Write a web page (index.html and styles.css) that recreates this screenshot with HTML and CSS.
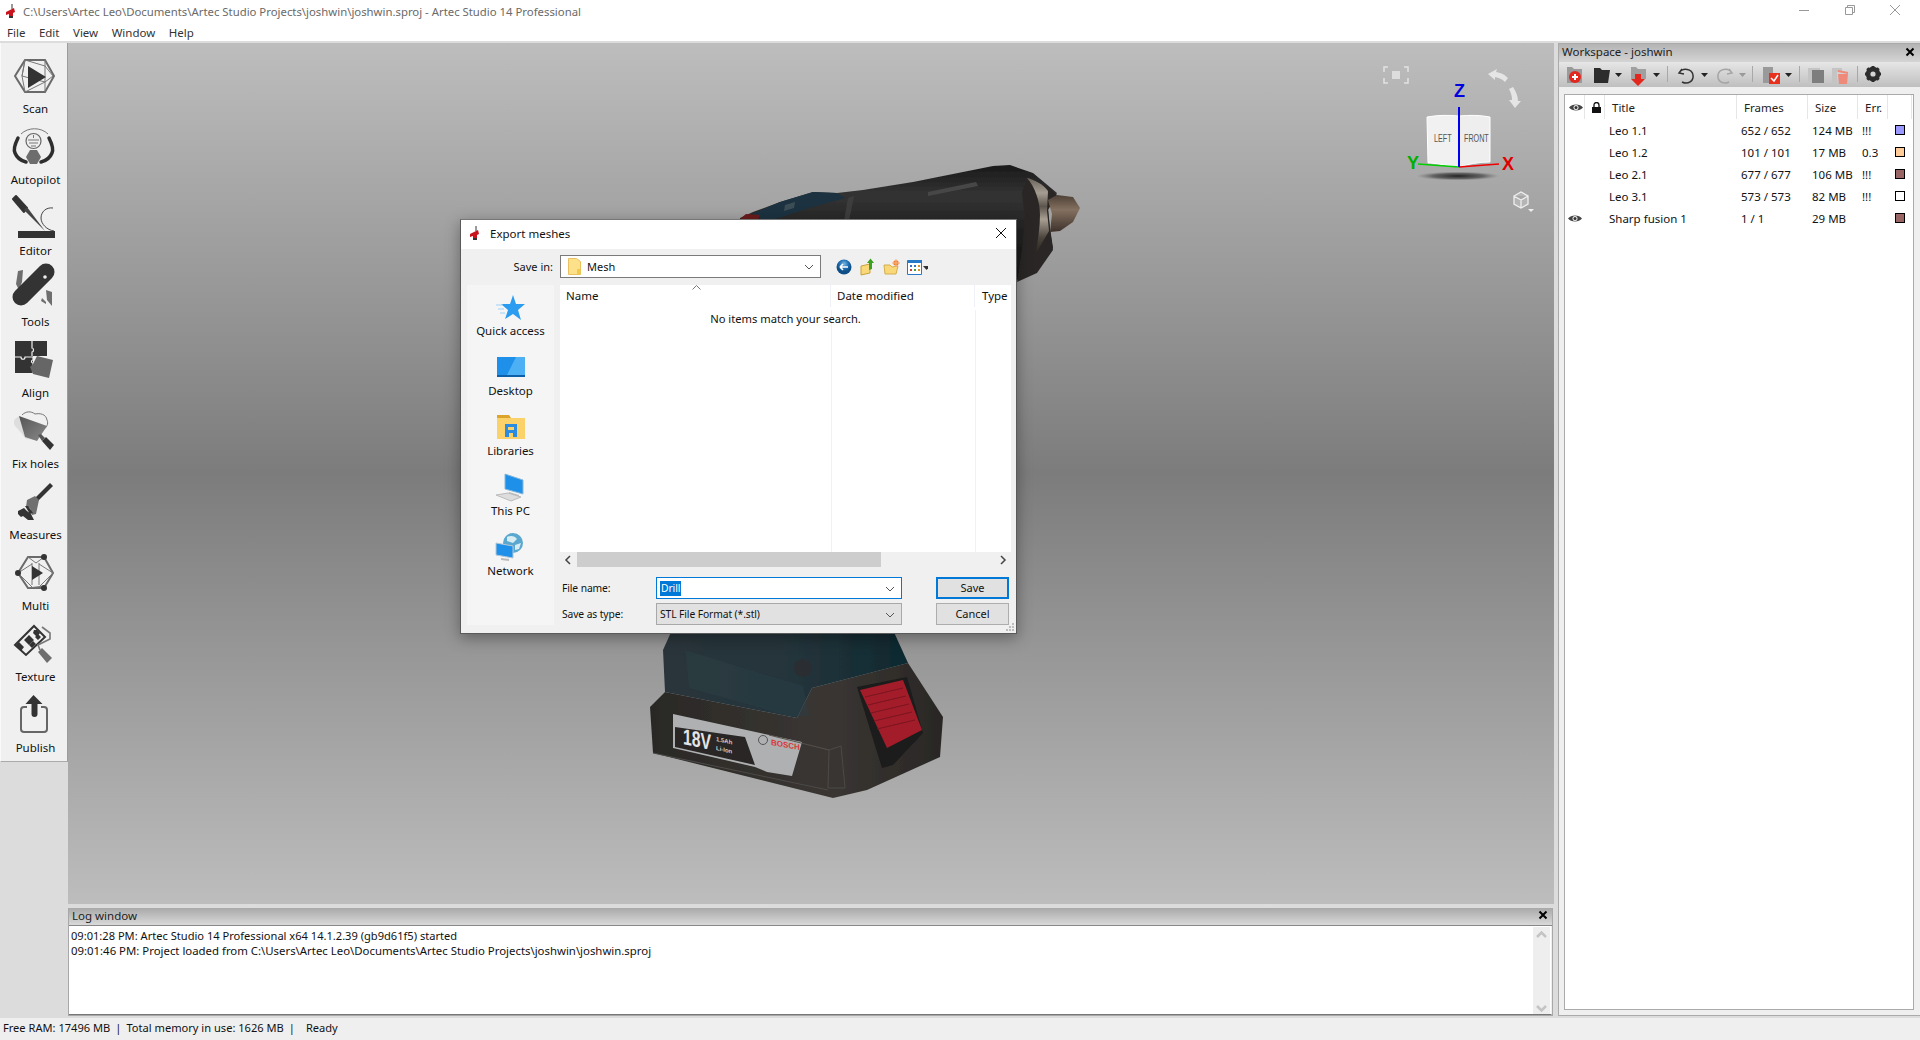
FILE: index.html
```html
<!DOCTYPE html>
<html lang="en">
<head>
<meta charset="utf-8">
<title>Artec Studio 14 Professional</title>
<link rel="stylesheet" href="styles.css">
</head>
<body>
<div class="app">
  <header class="titlebar">
    <svg class="app-icon" width="14" height="16" viewBox="0 0 14 16"><path d="M7 1h2v5H7z" fill="#9a9a9a"/><path d="M2 9l8-4 1 4-2 1v3H5v-2l-3 1z" fill="#c8141c"/><path d="M5 13h4v2H5z" fill="#333"/></svg>
    <span class="title-text">C:\Users\Artec Leo\Documents\Artec Studio Projects\joshwin\joshwin.sproj - Artec Studio 14 Professional</span>
    <div class="winctl">
      <svg width="130" height="20" viewBox="0 0 130 20"><path d="M14 10.500h10" class="wc"/><path d="M60.500 7.500h7v7h-7zM62.500 7V5.500h7v7h-2" class="wc"/><path d="M105 5l10 10M115 5l-10 10" class="wc"/></svg>
    </div>
  </header>
  <nav class="menubar"><span>File</span><span>Edit</span><span>View</span><span>Window</span><span>Help</span></nav>
  <main class="main">
    <aside class="leftcol">
      <div class="tools">
        <div class="tool"><svg class="ticon" viewBox="1 47 66 55"><path d="M15 76l10-16h20l9 16-9 16H25z" class="g2"/><path d="M25 60l20 6 8 10-8 6-20 10-3-16zM25 60l-3 16 23 6M45 60v32" class="g1"/><path d="M28 66l18 11-18 11z" fill="#333"/></svg><span>Scan</span></div>
        <div class="tool"><svg class="ticon" viewBox="1 118 66 55"><path d="M21 134c7-7 20-7 27 0" class="g1"/><circle cx="33.500" cy="141" r="7.500" fill="#eee" stroke="#666" stroke-width="1.200"/><path d="M28 140h11M29 143h9M31 146h5M33.500 135v3" class="g1"/><path d="M18 138c-3 6-5 11-3 15 2 5 7 8 11 9M49 138c3 6 5 11 3 15-2 5-7 8-11 9" fill="none" stroke="#2e2e2e" stroke-width="3.500" stroke-linecap="round"/><path d="M30 150h7l4 7-4 7h-7l-4-7z" fill="#6d6d6d"/></svg><span>Autopilot</span></div>
        <div class="tool"><svg class="ticon" viewBox="1 189 66 55"><path d="M13 199l3-3 11 12-3 4z" fill="#333" stroke="#333" stroke-width="2" stroke-linejoin="round"/><path d="M24 210l3-3 18 24z" fill="#444"/><path d="M18 231h37v7H18z" fill="#333"/><path d="M53 208c-7-1-12 4-12 10 0 6 6 12 13 13" fill="none" stroke="#444"/></svg><span>Editor</span></div>
        <div class="tool"><svg class="ticon" viewBox="1 260 66 55"><path d="M18 271l5-1-1 12-3 8-3-6zM46 290l6 2v14l-5-6zM42 298l4 4v2l-5-3z" fill="#6e6e6e"/><path d="M46 272L21 297" stroke="#333" stroke-width="17" stroke-linecap="round"/><circle cx="45" cy="277" r="1.800" fill="#eee"/></svg><span>Tools</span></div>
        <div class="tool"><svg class="ticon" viewBox="1 331 66 55"><path d="M15 341h32v15H33v17H15z" fill="#333"/><path d="M32 341v7c2 0 2 4 0 4v4M15 357h6c0 3 4 3 4 0h8v3c-2 0-2 3 0 3v10" fill="none" stroke="#f0f0f0" stroke-width="1.200"/><path d="M37 356l16 4-4 18-16-4-3-7 3-3z" fill="#666"/></svg><span>Align</span></div>
        <div class="tool"><svg class="ticon" viewBox="1 402 66 55"><path d="M17 428c-5-4-4-10 3-12l8 8 8 16-10-1z" fill="#ddd"/><path d="M22 415c4-4 9-4 13-1 5-1 11 0 12 6 2 4-1 8-3 9" fill="none" stroke="#777"/><defs><linearGradient id="tr" x1="0" y1="0" x2="1" y2="1"><stop offset="0" stop-color="#555"/><stop offset="1" stop-color="#8a8a8a"/></linearGradient></defs><path d="M19 416l28 10-10 15-12-4z" fill="url(#tr)"/><path d="M38 435l3-1 4 4-3 3z" fill="#555"/><path d="M42 441l4-4 8 8-4 5z" fill="#333"/></svg><span>Fix holes</span></div>
        <div class="tool"><svg class="ticon" viewBox="1 473 66 55"><path d="M35 498l15-15 3 3-15 15z" fill="#333"/><path d="M27 500l8-4 4 4-3 14-4 1-2-7-4-1z" fill="#707070"/><path d="M18 511l6-3 3 3 4 3 3 6-6 0-5-4-2 1-3-3zM25 506l3 0 5 7-3 1z" fill="#333"/></svg><span>Measures</span></div>
        <div class="tool"><svg class="ticon" viewBox="1 544 66 55"><path d="M18 573l10-16h16l9 16-9 15H28z" class="g2"/><path d="M28 557l8 6 8-6M18 573l14-9M53 573l-14-9M28 588l16-2M18 573l14 14M53 573l-14 14M32 563v22M39 563v22" class="g1"/><path d="M32 566l11 7-11 7z" fill="#333"/><circle cx="18" cy="573" r="3" fill="#333"/><circle cx="44" cy="557" r="3" fill="#333"/><circle cx="44" cy="588" r="3" fill="#333"/></svg><span>Multi</span></div>
        <div class="tool"><svg class="ticon" viewBox="1 615 66 55"><path d="M15 645l19-19 11 11-19 18z" fill="#f0f0f0" stroke="#333" stroke-width="2"/><path d="M24 640l5-5 5 5-5 5zM34 630l3 0 3 3-3 4-4-4zM16 645l3-3 5 5-3 4z" fill="#333"/><path d="M29 645l4-4 3 3-4 4zM38 634l3 3-3 3-3-3z" fill="#333"/><path d="M42 627l8 6 0 6-12 6 2 5" fill="none" stroke="#777" stroke-width="1.600"/><path d="M38 652l4-4 10 10-5 5z" fill="#6e6e6e"/></svg><span>Texture</span></div>
        <div class="tool"><svg class="ticon" viewBox="1 686 66 55"><path d="M27 707h-3a3 3 0 0 0-3 3v19a3 3 0 0 0 3 3h20a3 3 0 0 0 3-3v-19a3 3 0 0 0-3-3h-3" fill="none" stroke="#666" stroke-width="2"/><path d="M33.500 695l9 9h-5v10a3 3 0 0 1-6 0v-10h-6z" fill="#333"/></svg><span>Publish</span></div>
      </div>
    </aside>

    <section class="center">
      <div class="viewport">
        <svg class="scene" viewBox="68 43 1486 861">
          <defs>
            <linearGradient id="drillBody" x1="0" y1="0" x2="0" y2="1"><stop offset="0" stop-color="#1a1a1a"/><stop offset=".22" stop-color="#333"/><stop offset=".5" stop-color="#232323"/><stop offset="1" stop-color="#111"/></linearGradient>
            <linearGradient id="silver" x1="0" y1="0" x2="0" y2="1"><stop offset="0" stop-color="#6a635a"/><stop offset=".2" stop-color="#a59d91"/><stop offset=".38" stop-color="#5c554d"/><stop offset=".55" stop-color="#a89f92"/><stop offset=".8" stop-color="#4a433c"/><stop offset="1" stop-color="#2a2623"/></linearGradient>
            <linearGradient id="tip" x1="0" y1="0" x2="0" y2="1"><stop offset="0" stop-color="#4d4036"/><stop offset=".4" stop-color="#84705f"/><stop offset="1" stop-color="#3d322b"/></linearGradient>
            <linearGradient id="teal" x1="0" y1="0" x2="1" y2="0"><stop offset="0" stop-color="#2a353a"/><stop offset=".55" stop-color="#24343b"/><stop offset="1" stop-color="#0e2930"/></linearGradient>
            <linearGradient id="batt" x1="0" y1="0" x2="1" y2="0"><stop offset="0" stop-color="#2a2826"/><stop offset=".6" stop-color="#3a3633"/><stop offset="1" stop-color="#2a2726"/></linearGradient>
            <radialGradient id="shadow"><stop offset="0" stop-color="#222"/><stop offset=".6" stop-color="#444" stop-opacity=".7"/><stop offset="1" stop-color="#777" stop-opacity="0"/></radialGradient>
            <filter id="blur"><feGaussianBlur stdDeviation=".5"/></filter>
          </defs>
          <g filter="url(#blur)">
            <path d="M740 218l13-6 27-10 33-10 24 1 26-3 50-8 80-16 17-1 23 8 24 20-9 15 2 20 3 20-16 23-20 9-30 20H740z" fill="url(#drillBody)"/>
            <path d="M752 214l28-12 33-10 24 1 8 5-36 10-42 14z" fill="#1b3240"/>
            <path d="M740 219l6-5 14 1-2 5z" fill="#6b1d1a"/>
            <path d="M785 205l10-3-1 6-10 3z" fill="#3d4e55"/>
            <path d="M848 198l6-2-6 30-5 1z" fill="#3e3e3e"/>
            <path d="M928 192l48-10 2 4-50 10z" fill="#474747"/>
            <path d="M1027 177l23 11 7 7-9 15 2 20 3 20-16 23-20 9 5-32 3-33-3-24z" fill="#2c2825"/>
            <path d="M1027 178c8 2 16 6 21 13l-1 20 2 20-13 22c2-14 4-26 4-38 0-14-5-28-13-37z" fill="url(#silver)"/>
            <path d="M1048 200l9-5 16 2 7 11-7 14-13 9-10 1 2-18z" fill="url(#tip)"/>

            <path d="M665 692l-15 15 3 46 180 45 34-8 73-33 3-40-35-54-96 25-15 30z" fill="url(#batt)"/>
            <path d="M672 630l-9 20 2 42 132 26 15-30 96-25-15-33z" fill="url(#teal)"/>
            <circle cx="803" cy="668" r="9" fill="#2a2f32"/>
            <path d="M685 650l118 36 6 30-20 0-100-28z" fill="#2d4048" opacity=".45"/>
            <path d="M857 687l50-10 16 56-30 32-11 3z" fill="#1d1c1b"/>
            <path d="M860 690l43-10 19 50-35 18z" fill="#a21c2a"/>
            <path d="M865 697l38-9M868 705l38-9M871 713l38-9M874 721l38-9M877 729l38-9" stroke="#7a1620" stroke-width="1"/>
            <path d="M673 714l129 28-10 34-25-4-12-5-82-19z" fill="#aeb0b2"/>
            <path d="M675 727l70 10 10 28-80-18z" fill="#2a2726"/>
            <path d="M828 788l1-38 12-4 4 42zM653 753l175 37" stroke="#4d4a48" stroke-width="1" fill="none"/>
            <path d="M829 750l-60-15" stroke="#55504c" stroke-width="1" fill="none"/>
          </g>
          <text class="b18" transform="translate(683 744) skewY(12) scale(.72 1)">18V</text>
          <text class="bsm" transform="translate(716 741) skewY(12)">1.5Ah</text>
          <text class="bsm" transform="translate(716 750) skewY(12)">Li-Ion</text>
          <text class="bosch" transform="translate(771 745) skewY(10)">BOSCH</text>
          <circle cx="763" cy="740" r="4.500" fill="none" stroke="#555"/>

          <path d="M1388 67h-4v5M1404 67h4v5M1388 83h-4v-5M1404 83h4v-5" class="giz"/>
          <rect x="1392" y="71" width="8" height="8" fill="#ddd"/>
          <path d="M1488 74l9-5-1 3c6 1 9 3 12 6l-3 4c-3-3-6-4-10-5v3z" fill="#e5e5e5"/>
          <path d="M1513 87c3 5 5 9 5 14l3 0-6 7-6-8 3 0c0-4-1-7-3-11z" fill="#e5e5e5"/>
          <path d="M1427 117c11-2 21-2 32-1v51l-28-4-3 0z" fill="#f1f1f1" stroke="#fff"/>
          <path d="M1459 116c10-1 21-1 31 1v45c-11 0-22 2-31 5z" fill="#eee" stroke="#fff"/>
          <text class="cube" transform="translate(1434 142) scale(.72 1)">LEFT</text>
          <text class="cube" transform="translate(1464 142) scale(.72 1)">FRONT</text>
          <ellipse cx="1458" cy="176" rx="42" ry="4.500" fill="url(#shadow)"/>
          <path d="M1418 164l41 3" class="ax-g"/>
          <path d="M1459 167l40-3" class="ax-r"/>
          <path d="M1459 107v60" class="ax-b"/>
          <text class="axis z" x="1454" y="97">Z</text>
          <text class="axis y" x="1407" y="169">Y</text>
          <text class="axis ax" x="1502" y="170">X</text>
          <path d="M1514 196l7-4 7 4v8l-7 4-7-4zM1514 196l7 4 7-4M1521 200v8" fill="#ccc" fill-opacity=".4" stroke="#eee" stroke-width="1.300"/>
          <path d="M1528 209h6l-3 3z" fill="#eee"/>
        </svg>
      </div>
      <div class="log">
        <div class="log-head"><span>Log window</span><svg class="x" width="10" height="10" viewBox="0 0 10 10"><path d="M1.500 1.500l7 7M8.500 1.500l-7 7"/></svg></div>
        <div class="log-body">
          <div class="log-lines">
            <div>09:01:28 PM: Artec Studio 14 Professional x64 14.1.2.39 (gb9d61f5) started</div>
            <div class="wider">09:01:46 PM: Project loaded from C:\Users\Artec Leo\Documents\Artec Studio Projects\joshwin\joshwin.sproj</div>
          </div>
          <div class="vscroll"><svg width="17" height="87" viewBox="0 0 17 87"><path d="M4 11l4.500-4.500L13 11M4 80l4.500 4.500L13 80" transform="translate(0 -1)" fill="none" stroke="#c4c4c4" stroke-width="2.500"/></svg></div>
        </div>
      </div>
    </section>

    <aside class="workspace">
      <div class="ws-head"><span>Workspace - joshwin</span><svg class="x" width="10" height="10" viewBox="0 0 10 10"><path d="M1.500 1.500l7 7M8.500 1.500l-7 7"/></svg></div>
      <div class="ws-tools">
        <svg width="362" height="25" viewBox="1558 62 362 25">
          <path d="M1567 67h5l2 2h8v14h-15z" fill="#9a9a9a"/><circle cx="1575" cy="77" r="6" fill="#e2281e"/><path d="M1572 77h6M1575 74v6" stroke="#fff" stroke-width="2"/>
          <path d="M1594 68h6l2 2h8l-2 13h-14z" fill="#2c2c2c"/><path d="M1615 73h7l-3.500 4z" class="caret"/>
          <path d="M1631 67h5l2 2h8v10h-15z" fill="#a0a0a0"/><path d="M1635 74h6v5h4l-7 7-7-7h4z" fill="#e2281e"/><path d="M1653 73h7l-3.500 4z" class="caret"/>
          <path d="M1667.500 66v16" class="sep"/>
          <path d="M1682 69l-3 4 5 1M1679 73c4-6 13-4 14 2 1 6-5 10-11 7" fill="none" stroke="#333" stroke-width="1.500"/><path d="M1701 73h7l-3.500 4z" class="caret"/>
          <path d="M1729 69l3 4-5 1M1732 73c-4-6-13-4-14 2-1 6 5 10 11 7" fill="none" stroke="#a5a5a5" stroke-width="1.500"/><path d="M1739 73h7l-3.500 4z" fill="#999"/>
          <path d="M1752.500 66v16" class="sep"/>
          <path d="M1763 67h10v6h-4v10h-6z" fill="#9a9a9a"/><path d="M1769 73h11v11h-11z" fill="#e8301e"/><path d="M1771 78l3 3 4-6" fill="none" stroke="#fff" stroke-width="1.500"/><path d="M1785 73h7l-3.500 4z" class="caret"/>
          <path d="M1799.500 66v16" class="sep"/>
          <path d="M1808 68h12v3h-8v11h-4z" fill="#c4c4c4"/><path d="M1812 70h12v13h-12z" fill="#7e7e7e"/>
          <path d="M1832 68h10v4h-5v11h-5z" fill="#c4c4c4"/><path d="M1838 74h10l-1 10h-8z" fill="#ef8a7a"/><path d="M1838 71l10 2" stroke="#ef8a7a" stroke-width="2"/>
          <path d="M1857.500 66v16" class="sep"/>
          <circle cx="1873" cy="74" r="5.500" fill="none" stroke="#2c2c2c" stroke-width="3.500"/>
          <path d="M1873 66v16M1865 74h16M1867.300 68.300l11.400 11.400M1878.700 68.300l-11.400 11.400" stroke="#2c2c2c" stroke-width="3"/>
          <circle cx="1873" cy="74" r="2.600" fill="#d4d4d4"/>
        </svg>
      </div>
      <div class="ws-body">
        <div class="ws-list">
          <div class="ws-row ws-header">
            <div class="c-eye"><svg class="eye" width="14" height="9" viewBox="0 0 14 9"><path d="M0 4.500C3 .5 11 .5 14 4.500 11 8.500 3 8.500 0 4.500z" fill="#444"/><circle cx="7" cy="4.500" r="2.500" fill="#eee"/><circle cx="7" cy="4.500" r="1.500" fill="#333"/></svg></div>
            <div class="c-lock"><svg width="9" height="11" viewBox="0 0 9 11"><path d="M2 5V3a2.500 2.500 0 0 1 5 0v2" fill="none" stroke="#111" stroke-width="1.300"/><path d="M0 5h9v6H0z" fill="#111"/></svg></div>
            <div class="c-title">Title</div><div class="c-frames">Frames</div><div class="c-size">Size</div><div class="c-err">Err.</div><div class="c-sw"></div>
          </div>
          <div class="ws-row"><div class="c-eye"></div><div class="c-lock"></div><div class="c-title">Leo 1.1</div><div class="c-frames">652 / 652</div><div class="c-size">124 MB</div><div class="c-err">!!!</div><div class="c-sw"><i class="swatch s1"></i></div></div>
          <div class="ws-row"><div class="c-eye"></div><div class="c-lock"></div><div class="c-title">Leo 1.2</div><div class="c-frames">101 / 101</div><div class="c-size">17 MB</div><div class="c-err">0.3</div><div class="c-sw"><i class="swatch s2"></i></div></div>
          <div class="ws-row"><div class="c-eye"></div><div class="c-lock"></div><div class="c-title">Leo 2.1</div><div class="c-frames">677 / 677</div><div class="c-size">106 MB</div><div class="c-err">!!!</div><div class="c-sw"><i class="swatch s3"></i></div></div>
          <div class="ws-row"><div class="c-eye"></div><div class="c-lock"></div><div class="c-title">Leo 3.1</div><div class="c-frames">573 / 573</div><div class="c-size">82 MB</div><div class="c-err">!!!</div><div class="c-sw"><i class="swatch s4"></i></div></div>
          <div class="ws-row"><div class="c-eye"><svg class="eye" width="14" height="9" viewBox="0 0 14 9"><path d="M0 4.500C3 .5 11 .5 14 4.500 11 8.500 3 8.500 0 4.500z" fill="#444"/><circle cx="7" cy="4.500" r="2.500" fill="#eee"/><circle cx="7" cy="4.500" r="1.500" fill="#333"/></svg></div><div class="c-lock"></div><div class="c-title">Sharp fusion 1</div><div class="c-frames">1 / 1</div><div class="c-size">29 MB</div><div class="c-err"></div><div class="c-sw"><i class="swatch s3"></i></div></div>
        </div>
      </div>
    </aside>
  </main>
  <footer class="statusbar"><span>Free RAM: 17496 MB</span><b>|</b><span>Total memory in use: 1626 MB</span><b>|</b><span class="ready">Ready</span></footer>
</div>

<div class="dialog">
  <div class="dlg-title">
    <svg class="dlg-icon" width="14" height="16" viewBox="0 0 14 16"><path d="M7 1h2v5H7z" fill="#9a9a9a"/><path d="M2 9l8-4 1 4-2 1v3H5v-2l-3 1z" fill="#c8141c"/><path d="M5 13h4v2H5z" fill="#333"/></svg>
    <span>Export meshes</span>
    <svg class="dlg-close" width="12" height="12" viewBox="0 0 12 12"><path d="M1 1l10 10M11 1L1 11" stroke="#111" fill="none"/></svg>
  </div>
  <div class="dlg-nav">
    <label>Save in:</label>
    <div class="combo combo-save">
      <svg width="13" height="17" viewBox="0 0 13 17"><path d="M.5.500h8l4 3v13H.5z" fill="#fde08a" stroke="#e8c060"/><path d="M9 11h3.500v5.500H9z" fill="#f2c94c"/></svg>
      <span>Mesh</span>
      <svg class="chev" width="10" height="6" viewBox="0 0 10 6"><path d="M1 1l4 4 4-4" fill="none" stroke="#555"/></svg>
    </div>
    <svg class="nav-icons" width="100" height="20" viewBox="0 0 100 20">
      <defs><radialGradient id="bl" cx=".5" cy=".3"><stop offset="0" stop-color="#7fb8e0"/><stop offset=".6" stop-color="#1f6fb4"/><stop offset="1" stop-color="#0f4f88"/></radialGradient></defs>
      <circle cx="16" cy="10" r="7.500" fill="url(#bl)"/><path d="M12 10h8M12 10l3-3M12 10l3 3" stroke="#fff" stroke-width="1.600" fill="none"/>
      <path d="M33 9l9-2v9l-9 2z" fill="#f8d878" stroke="#c9a23c"/><path d="M41 13V6h-2l3.500-4.500L46 6h-2v6z" fill="#3ca020"/>
      <path d="M56 8h6l2 2 6-1-2 8H57z" fill="#f8d878" stroke="#d4ae50"/><circle cx="68" cy="6" r="2.700" fill="#f08030"/><path d="M68 2v8M64 6h8" stroke="#f8b080"/>
      <path d="M79.500 3.500h14v14h-14z" fill="#fff" stroke="#2878c8"/><path d="M80 3h14v3H80z" fill="#2878c8"/><path d="M82 8h2v2h-2zM86 8h2v2h-2z" fill="#3a6ec0"/><path d="M90 8h2v2h-2zM90 12h2v2h-2z" fill="#e09020"/><path d="M82 12h2v2h-2z" fill="#c84040"/><path d="M86 12h2v2h-2z" fill="#40a040"/><path d="M95 9h7l-3.500 4z" fill="#333"/>
    </svg>
  </div>
  <div class="dlg-main">
    <div class="places">
      <div class="place"><svg width="30" height="30" viewBox="0 0 30 30"><path d="M18 2l3 9 9 0-7 6 3 10-8-6-8 5 3-9-7-6h9z" fill="#2c9cf0"/><path d="M1 12h7M3 16h6M5 20h5" stroke="#9cd0f8"/></svg><span>Quick access</span></div>
      <div class="place"><svg width="30" height="30" viewBox="0 0 30 30"><path d="M1 4h28v20H1z" fill="#1e90ea"/><path d="M20 4h9v20H10z" fill="#4db0f4"/><path d="M1 22h28v2H1z" fill="#0f5fa8"/></svg><span>Desktop</span></div>
      <div class="place"><svg width="30" height="30" viewBox="0 0 30 30"><path d="M1 2h12l2 3H1z" fill="#dca42c"/><path d="M1 5h28v21H1z" fill="#fbd26a"/><path d="M9 11h12v13h-4v-4h-4v4H9z" fill="#2a8ce0"/><path d="M12 14h6v3h-6z" fill="#fbd26a"/></svg><span>Libraries</span></div>
      <div class="place"><svg width="30" height="30" viewBox="0 0 30 30"><path d="M10 1l18 6v14l-18-5z" fill="#1e90ea" stroke="#8ab8d8"/><path d="M14 19l10 3v2l-10-3z" fill="#bbb"/><path d="M1 22l12-2 13 4-10 4z" fill="#ddd" stroke="#bbb"/></svg><span>This PC</span></div>
      <div class="place"><svg width="30" height="30" viewBox="0 0 30 30"><circle cx="18" cy="10" r="10" fill="#5aa8d0"/><path d="M12 4c4-2 8-1 10 2l-4 4-6-2zM20 12l6-2-2 6-4 1z" fill="#d8ecf4"/><path d="M1 10l17 3v12L1 22z" fill="#1e90ea" stroke="#b8c8d4"/><path d="M6 25l8 1v2l-8-1z" fill="#bbb"/></svg><span>Network</span></div>
    </div>
    <div class="dlg-right">
      <div class="filelist">
        <div class="fl-head"><span class="fh-name">Name</span><span class="fh-date">Date modified</span><span class="fh-type">Type</span><svg class="sort" width="9" height="5" viewBox="0 0 9 5"><path d="M.5 4.500l4-4 4 4" fill="none" stroke="#777"/></svg></div>
        <div class="fl-body"><div class="empty">No items match your search.</div></div>
        <div class="hscroll">
          <svg width="8" height="10" viewBox="0 0 8 10"><path d="M6 1L2 5l4 4" fill="none" stroke="#444" stroke-width="1.500"/></svg>
          <div class="thumb"></div>
          <svg class="hs-r" width="8" height="10" viewBox="0 0 8 10"><path d="M2 1l4 4-4 4" fill="none" stroke="#444" stroke-width="1.500"/></svg>
        </div>
      </div>
      <div class="form">
        <label>File name:</label>
        <div class="combo fname"><span class="sel">Drill</span><svg class="chev" width="10" height="6" viewBox="0 0 10 6"><path d="M1 1l4 4 4-4" fill="none" stroke="#555"/></svg></div>
        <div class="btn primary">Save</div>
        <label>Save as type:</label>
        <div class="combo ftype"><span>STL File Format (*.stl)</span><svg class="chev" width="10" height="6" viewBox="0 0 10 6"><path d="M1 1l4 4 4-4" fill="none" stroke="#555"/></svg></div>
        <div class="btn">Cancel</div>
      </div>
    </div>
  </div>
  <svg class="grip" width="9" height="9" viewBox="0 0 9 9"><path d="M6 0h2v2H6zM3 3h2v2H3zM6 3h2v2H6zM0 6h2v2H0zM3 6h2v2H3zM6 6h2v2H6z" fill="#bdbdbd"/></svg>
</div>
</body>
</html>
```

FILE: styles.css
```css
* { box-sizing: border-box; }
html, body { margin: 0; height: 100%; overflow: hidden; }
body { font-family: "Noto Sans", "Open Sans", sans-serif; font-size: 11.5px; color: #111; background: #dcdcdc; }
.app { width: 1920px; height: 1040px; display: flex; flex-direction: column; position: relative; overflow: hidden; }

.titlebar { height: 22px; background: #fff; display: flex; align-items: center; padding: 0 0 0 4px; position: relative; }
.app-icon { flex: none; }
.title-text { margin-left: 5px; color: #6a6a6a; font-size: 11.35px; }
.winctl { margin-left: auto; padding-right: 5px; height: 20px; align-self: flex-start; }
.wc { fill: none; stroke: #999; stroke-width: 1; }
.menubar { height: 19px; background: #fff; display: flex; gap: 13.5px; padding: 1px 0 0 7px; align-items: center; color: #333; }

.main { height: 975px; flex: none; margin-top: 2px; display: flex; background: #dcdcdc; }
.leftcol { width: 68px; flex: none; }
.tools { height: 719px; width: 68px; background: #f0f0f0; border-right: 1px solid #9c9c9c; border-bottom: 1px solid #aaa; border-left: 1px solid #fafafa; padding-top: 4px; }
.tool { height: 71px; display: flex; flex-direction: column; align-items: center; }
.ticon { width: 66px; height: 55px; flex: none; }
.tool span { line-height: 16px; color: #111; margin: -1px 0 0 3px; }
.g1 { fill: none; stroke: #777; stroke-width: 1; }
.g2 { fill: none; stroke: #6a6a6a; stroke-width: 2; }

.center { width: 1486px; flex: none; display: flex; flex-direction: column; }
.viewport { height: 861px; background: linear-gradient(180deg, #bdbdbd 0%, #7c7c7c 50%, #bdbdbd 100%); position: relative; overflow: hidden; }
.scene { display: block; width: 1486px; height: 861px; }
.b18 { font: 700 22px "Liberation Sans", sans-serif; fill: #e4e4e4; }
.bsm { font: 700 6px "Liberation Sans", sans-serif; fill: #cfcfcf; }
.bosch { font: 700 8px "Liberation Sans", sans-serif; fill: #d93a3a; }
.giz { fill: none; stroke: #e2e2e2; stroke-width: 1.500; }
.cube { font: 400 10px "Liberation Sans", sans-serif; fill: #555; }
.ax-b { stroke: #0000f0; stroke-width: 2; }
.ax-g { stroke: #00d000; stroke-width: 1.500; }
.ax-r { stroke: #f00000; stroke-width: 1.500; }
.axis { font: 700 18px "Liberation Sans", sans-serif; }
.z { fill: #0000e0; }
.y { fill: #00b000; }
.ax { fill: #e00000; }
svg.x path { stroke: #000; stroke-width: 2; fill: none; }

.log { margin-top: 4px; height: 108px; width: 1485px; border: 1px solid #a8a8a8; border-width: 0 1px 1px 1px; display: flex; flex-direction: column; background: #f0f0f0; }
.log-head { height: 18px; flex: none; background: linear-gradient(180deg, #a9a9a9, #d9d9d9); padding: 0 4px 3px 3px; display: flex; align-items: center; justify-content: space-between; color: #222; border-bottom: 1px solid #888; }
.log-body { flex: 1; background: #fff; display: flex; border-right: 1px solid #eee; border-bottom: 1px solid #777; }
.log-lines { flex: 1; padding: 2px 0 0 2px; line-height: 15px; font-size: 11.1px; }
.wider { font-size: 11.38px; }
.vscroll { width: 17px; background: #eee; margin: 1px 1px 0 0; }
.vscroll svg { display: block; }

.workspace { width: 362px; flex: none; margin-left: 4px; background: #efefef; display: flex; flex-direction: column; border-top: 1px solid #aaa; height: 973px; border-bottom: 1px solid #aaa; border-left: 1px solid #aaa; }
.ws-head { height: 18px; flex: none; background: linear-gradient(180deg, #b4b4b4, #d4d4d4); padding: 0 5px 3px 3px; display: flex; align-items: center; justify-content: space-between; color: #222; }
.ws-tools { height: 25px; flex: none; background: linear-gradient(180deg, #e6e6e6, #bfbfbf); }
.ws-tools svg { display: block; margin-left: -1px; }
.caret { fill: #222; }
.sep { stroke: #a8a8a8; stroke-width: 1; }
.ws-body { flex: 1; padding: 7px 6px 5px 5px; }
.ws-list { height: 100%; background: #fff; border: 1px solid #aaa; }
.ws-row { height: 22px; display: grid; grid-template-columns: 20px 20px 132px 71px 50px 30px 24px; align-items: center; color: #111; }
.ws-header { height: 24px; }
.ws-header > div { height: 24px; display: flex; align-items: center; border-right: 1px solid #e6e6e6; padding-left: 7px; color: #222; }
.ws-header .c-eye, .ws-header .c-lock { padding-left: 3px; justify-content: center; }
.ws-row .c-eye { display: flex; justify-content: center; }
.ws-row > .c-title { padding-left: 4px; }
.ws-row > .c-frames, .ws-row > .c-size, .ws-row > .c-err { padding-left: 4px; }
.ws-header > .c-title, .ws-header > .c-frames, .ws-header > .c-size, .ws-header > .c-err { padding-left: 7px; }
.c-sw { display: flex; padding-left: 7px; }
.swatch { display: block; width: 10px; height: 10px; border: 1px solid #000; }
.s1 { background: #9999ff; }
.s2 { background: #ffcc99; }
.s3 { background: #996666; }
.s4 { background: #fff; }

.statusbar { height: 22px; flex: none; background: #efefef; display: flex; align-items: center; padding: 0 0 3px 3px; gap: 5px; position: relative; font-size: 11.1px; }
.statusbar b { font-weight: 400; }
.ready { margin-left: 6px; }

.dialog { position: absolute; left: 460px; top: 219px; width: 557px; height: 415px; background: #f0f0f0; border: 1px solid #5a5a5a; border-top-color: #777; box-shadow: 0 4px 14px rgba(0,0,0,.35); display: flex; flex-direction: column; }
.dlg-title { height: 29px; flex: none; background: #fff; display: flex; align-items: center; padding: 0 0 3px 7px; color: #111; }
.dlg-icon { margin-right: 8px; }
.dlg-close { margin-left: auto; margin-right: 9px; }
.dlg-nav { height: 36px; flex: none; display: flex; align-items: center; padding: 0 0 1px 0; }
.dlg-nav label { width: 92px; text-align: right; margin-right: 7px; font-size: 11px; }
.combo { display: flex; align-items: center; position: relative; }
.combo-save { width: 261px; height: 23px; background: #fff; border: 1px solid #7a7a7a; padding-left: 7px; gap: 6px; font-size: 11px; }
.chev { position: absolute; right: 6px; top: 8px; }
.nav-icons { margin-left: 7px; }
.dlg-main { flex: 1; display: flex; padding: 0 6px 10px 6px; gap: 6px; }
.places { width: 87px; flex: none; background: #f5f5f5; display: flex; flex-direction: column; align-items: center; }
.place { height: 60px; display: flex; flex-direction: column; align-items: center; }
.place svg { margin-top: 8px; flex: none; }
.place span { line-height: 16px; }
.dlg-right { width: 451px; flex: none; display: flex; flex-direction: column; }
.filelist { height: 282px; flex: none; background: #fff; display: flex; flex-direction: column; }
.fl-head { height: 25px; flex: none; position: relative; display: grid; grid-template-columns: 271px 144px 36px; align-items: start; }
.fl-head span { padding-left: 6px; border-right: 1px solid #eef2f6; height: 22px; line-height: 22px; }
.fh-type { border-right: 0 !important; padding-left: 7px !important; }
.sort { position: absolute; left: 132px; top: 0; }
.fl-body { flex: 1; background: linear-gradient(#eef2f8, #eef2f8) 271px 0 / 1px 100% no-repeat, linear-gradient(#eef2f8, #eef2f8) 415px 0 / 1px 100% no-repeat, #fff; text-align: center; }
.empty { line-height: 16px; margin-top: 1px; font-size: 11.2px; }
.hscroll { height: 15px; flex: none; background: #f0f0f0; display: flex; align-items: center; padding: 0 4px; }
.thumb { width: 304px; height: 15px; margin-left: 5px; background: #cdcdcd; }
.hs-r { margin-left: auto; }
.form { display: grid; grid-template-columns: 96px 246px 107px; grid-template-rows: 22px 22px; row-gap: 4px; margin-top: 10px; align-items: center; font-size: 10.3px; letter-spacing: -.1px; }
.form label { padding-left: 2px; }
.fname { height: 22px; background: #fff; border: 1px solid #0078d7; padding-left: 3px; }
.sel { background: #0078d7; color: #fff; padding: 0 1px; line-height: 15px; }
.ftype { height: 22px; background: #e1e1e1; border: 1px solid #a8a8a8; padding-left: 3px; }
.btn { height: 22px; background: #e1e1e1; border: 1px solid #adadad; text-align: center; line-height: 20px; margin-left: 34px; width: 73px; font-size: 11px; letter-spacing: 0; }
.primary { border: 2px solid #0078d7; line-height: 18px; }
.grip { position: absolute; right: 1px; bottom: 1px; }
```
